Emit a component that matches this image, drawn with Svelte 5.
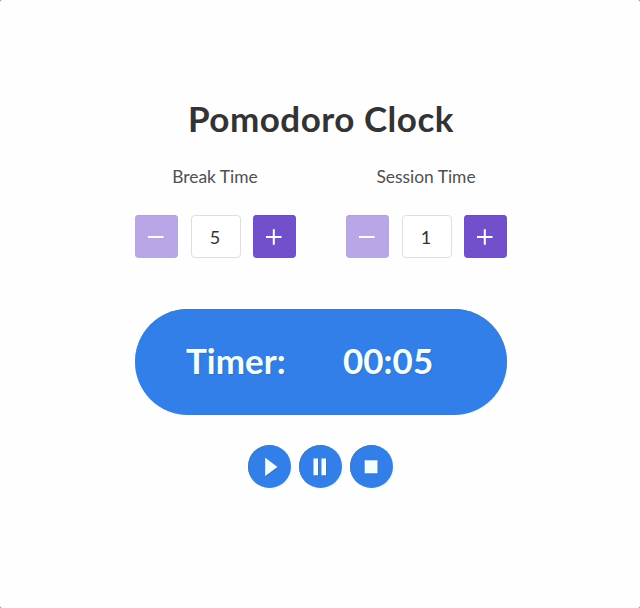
<script>
  let breakTime = $state(5);
  let sessionTime = $state(1);
  let seconds = $state(5);
  const time = $derived(
    `${String(Math.floor(seconds / 60)).padStart(2, '0')}:${String(seconds % 60).padStart(2, '0')}`
  );
</script>

{#snippet stepper(label, value, change)}
  <section class="setting">
    <h2>{label}</h2>
    <div class="row">
      <button class="step minus" disabled={value <= 1} aria-label="Decrease" onclick={() => change(-1)}>
        <svg viewBox="0 0 43 43"><path d="M13 22H28.5" /></svg>
      </button>
      <output>{value}</output>
      <button class="step" aria-label="Increase" onclick={() => change(1)}>
        <svg viewBox="0 0 43 43"><path d="M13 22H28.5M20.8 14.2V29.8" /></svg>
      </button>
    </div>
  </section>
{/snippet}

<div class="window">
  <main>
    <h1>Pomodoro Clock</h1>
    <div class="settings">
      {@render stepper('Break Time', breakTime, (d) => (breakTime += d))}
      {@render stepper('Session Time', sessionTime, (d) => (sessionTime += d))}
    </div>
    <div class="timer">
      <span class="caption">Timer:</span>
      <span class="time">{time}</span>
    </div>
    <div class="controls">
      <button aria-label="Play"><svg viewBox="0 0 43 43"><path d="M17.2 12.8L29.5 22L17.2 31Z" /></svg></button>
      <button aria-label="Pause"><svg viewBox="0 0 43 43"><path d="M14.5 13.5H19V30.2H14.5ZM22.5 13.5H27V30.2H22.5Z" /></svg></button>
      <button aria-label="Stop"><svg viewBox="0 0 43 43"><path d="M14.7 15.3H27.5V28.3H14.7Z" /></svg></button>
    </div>
  </main>
</div>

<style>
  :global(body) {
    margin: 0;
    background: #777;
  }
  .window {
    height: 608px;
    border-radius: 2px;
    background: #fefefe;
  }
  main {
    box-sizing: border-box;
    width: 372px;
    height: 608px;
    margin-left: 135px;
    padding-top: 95px;
    font-family: Lato, "Open Sans", sans-serif;
    color: #333;
  }
  h1 {
    margin: 0;
    height: 46px;
    line-height: 46px;
    font-size: 35px;
    font-weight: 700;
    text-align: center;
    letter-spacing: 0.5px;
    white-space: nowrap;
  }
  .settings {
    display: flex;
    justify-content: space-between;
    margin-top: 23px;
  }
  .setting {
    width: 161px;
  }
  h2 {
    margin: 0 0 25px;
    height: 26px;
    line-height: 26px;
    font-size: 17.4px;
    font-weight: 400;
    text-align: center;
    text-indent: -1px;
    color: #505050;
    white-space: nowrap;
  }
  .row {
    display: flex;
    justify-content: space-between;
  }
  button {
    padding: 0;
    border: 0;
    display: block;
    width: 43px;
    height: 43px;
  }
  svg {
    display: block;
    width: 43px;
    height: 43px;
  }
  .step {
    border-radius: 4px;
    background: #7350cb;
    box-shadow: inset 0 1px 1px #6556a0;
  }
  .step.minus {
    background: #b9a6e6;
    box-shadow: inset 0 1px 1px #b0a6c8;
  }
  .step path {
    fill: none;
    stroke: #fff;
    stroke-width: 2;
  }
  output {
    box-sizing: border-box;
    width: 50px;
    height: 43px;
    border: 1px solid #dedede;
    border-radius: 4px;
    background: #fff;
    font-size: 18px;
    line-height: 42px;
    text-align: center;
    text-indent: -1px;
    color: #333;
  }
  .timer {
    box-sizing: border-box;
    display: flex;
    height: 106px;
    margin-top: 51px;
    padding-left: 51px;
    border-radius: 53px;
    background: #327fea;
    box-shadow: inset 0 1px 1px #50779f, 1px 1px 1px #e2fbff;
    color: #f0ffff;
    font-size: 35px;
    font-weight: 700;
    line-height: 103px;
    white-space: nowrap;
    text-shadow: 1px 1px 1px #496f9c;
  }
  .caption {
    width: 157px;
  }
  .controls {
    display: flex;
    gap: 8px;
    margin: 30px 0 0 113px;
  }
  .controls button {
    border-radius: 50%;
    background: #327fea;
    box-shadow: inset 1px 1px 1px #5078a4, 1px 1px 2px #d9f9ff;
  }
  .controls path {
    fill: #f0ffff;
    filter: drop-shadow(1px 1px 0.5px #4b739c);
  }
</style>
